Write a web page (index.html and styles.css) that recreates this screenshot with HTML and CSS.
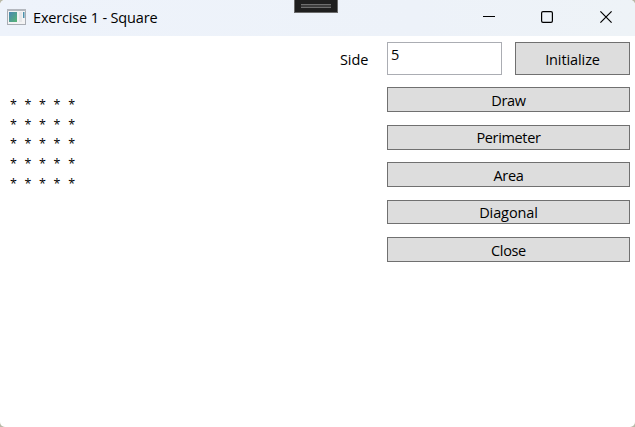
FILE: index.html
```
<!DOCTYPE html>
<html lang="en">
<head>
<meta charset="utf-8">
<title>Exercise 1 - Square</title>
<link rel="stylesheet" href="styles.css">
</head>
<body>
<div class="window">
  <header class="titlebar">
    <svg class="app-icon" width="19" height="16" viewBox="0 0 19 16">
      <defs><linearGradient id="pane" x1="0" y1="0" x2="1" y2="1"><stop offset="0" stop-color="#4a86b4"/><stop offset="1" stop-color="#57b573"/></linearGradient></defs>
      <rect x=".5" y=".5" width="18" height="15" fill="#f3f3f4" stroke="#a9adb4"/>
      <path d="M0 1h19" stroke="#b4b8bf" stroke-width="2"/>
      <rect x="2" y="3" width="8" height="10" fill="url(#pane)"/>
      <rect x="12" y="3" width="3" height="10" fill="#e6e7e9"/>
      <rect x="16" y="3" width="1.5" height="6" fill="#4c91ac"/>
    </svg>
    <h1 class="title">Exercise 1 - Square</h1>
    <div class="controls">
      <svg width="12" height="12"><path d="M0 5.5h12" stroke="#000"/></svg>
      <svg width="12" height="12"><rect x=".6" y=".6" width="10.8" height="10.8" rx="1.4" fill="none" stroke="#000" stroke-width="1.2"/></svg>
      <svg width="12" height="12"><path d="M.4.4l11.2 11.2M11.6.4L.4 11.6" stroke="#000" stroke-width="1.2"/></svg>
    </div>
  </header>
  <div class="debug-grip"><i></i></div>
  <main class="content">
    <section class="canvas">
      <div>* * * * *</div><div>* * * * *</div><div>* * * * *</div><div>* * * * *</div><div>* * * * *</div>
    </section>
    <label class="label" for="side">Side</label>
    <section class="form">
      <div class="row">
        <div class="field" id="side">5</div>
        <button class="btn init"><span>Initialize</span></button>
      </div>
      <button class="btn draw"><span>Draw</span></button>
      <button class="btn perimeter"><span>Perimeter</span></button>
      <button class="btn area"><span>Area</span></button>
      <button class="btn diagonal"><span>Diagonal</span></button>
      <button class="btn close"><span>Close</span></button>
    </section>
  </main>
</div>
</body>
</html>
```
FILE: styles.css
```
* { box-sizing: border-box; }
body {
  margin: 0;
  background: #b9b9a8;
  font: 14.5px/20px "Open Sans", "Noto Sans", sans-serif;
  color: #000;
  overflow: hidden;
}
.window {
  position: relative;
  width: 635px;
  height: 427px;
  background: #fff;
  border-radius: 5px;
  overflow: hidden;
}
.titlebar {
  display: flex;
  align-items: center;
  height: 36px;
  padding: 0 23px 2px 7px;
  background: linear-gradient(90deg, #eef3fb, #edf2f9 65%, #eef3f7);
}
.app-icon { margin-top: -1px; }
.title {
  margin: 2px 0 0 7px;
  font-size: 14.5px;
  font-weight: 400;
  letter-spacing: -0.16px;
  white-space: nowrap;
}
.controls { display: flex; gap: 46px; margin-left: auto; }
.controls svg { display: block; }
.controls svg:last-child { margin-left: 1px; }
.debug-grip {
  position: absolute;
  top: 0;
  left: 294px;
  width: 44px;
  height: 13px;
  padding: 4px 6px;
  background: #1f1f1f;
  border: 1px solid #6b6b6b;
  border-top: 0;
}
.debug-grip i {
  display: block;
  height: 4px;
  border: solid #6e6e6e;
  border-width: 1px 0;
  background: #3c3c3c;
}
.content {
  display: grid;
  grid-template-columns: 330px 47px 243px;
  padding: 6px 5px 0 10px;
}
.canvas {
  padding-top: 53px;
  font-size: 12.5px;
  line-height: 19.7px;
  word-spacing: 4.4px;
}
.label { padding-top: 8px; letter-spacing: -0.1px; }
.row { display: flex; justify-content: space-between; margin-bottom: 12px; }
.field {
  width: 115px;
  height: 33px;
  padding: 2px 3px;
  border: 1px solid #abadb3;
}
.btn {
  display: flex;
  justify-content: center;
  align-items: center;
  width: 243px;
  height: 25px;
  margin: 0 0 13px;
  padding: 2px 0 0;
  font: inherit;
  color: inherit;
  letter-spacing: -0.35px;
  background: #ddd;
  border: 1px solid #707070;
  border-radius: 0;
}
.init { width: 115px; height: 33px; margin: 0; letter-spacing: -0.1px; }
.perimeter { margin-bottom: 12px; padding-top: 0; }
.diagonal { height: 24px; letter-spacing: -0.1px; }
```
